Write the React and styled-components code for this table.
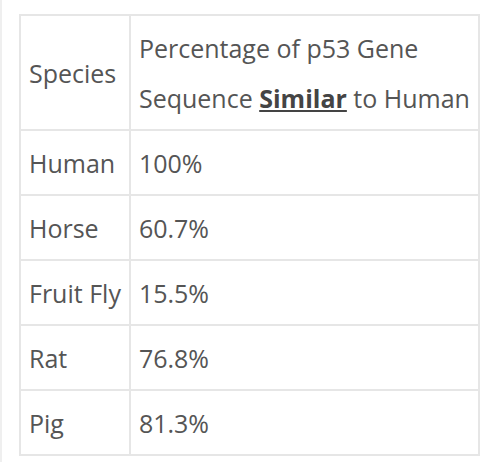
import React from 'react'
import styled, { createGlobalStyle } from 'styled-components'

const GlobalStyle = createGlobalStyle`
  html, body {
    margin: 0;
    padding: 0;
    background: #fff;
  }
`

const Page = styled.div`
  width: 482px;
  height: 462px;
  box-sizing: border-box;
  border-left: 2px solid #efefef;
  padding: 14px 3px 0 17px;
  font-family: "Open Sans", "Liberation Sans", sans-serif;
  color: #555;
`

const Table = styled.table`
  width: 100%;
  border-collapse: collapse;
  font-size: 25px;
  line-height: 50px;
`

const Cell = styled.td`
  border: 2px solid #e6e6e6;
  padding: 7px 8px 6px;
  vertical-align: middle;
  text-align: left;
  white-space: nowrap;
  width: ${p => p.$width || 'auto'};
`

const Strong = styled.strong`
  font-weight: 700;
  text-decoration: underline;
  color: #444;
`

const rows = [
  ['Human', '100%'],
  ['Horse', '60.7%'],
  ['Fruit Fly', '15.5%'],
  ['Rat', '76.8%'],
  ['Pig', '81.3%'],
]

export default function App() {
  return (
    <>
      <GlobalStyle />
      <Page>
        <Table>
          <tbody>
            <tr>
              <Cell $width="92px">Species</Cell>
              <Cell>
                Percentage of p53 Gene
                <br />
                Sequence <Strong>Similar</Strong> to Human
              </Cell>
            </tr>
            {rows.map(([name, value]) => (
              <tr key={name}>
                <Cell>{name}</Cell>
                <Cell>{value}</Cell>
              </tr>
            ))}
          </tbody>
        </Table>
      </Page>
    </>
  )
}
